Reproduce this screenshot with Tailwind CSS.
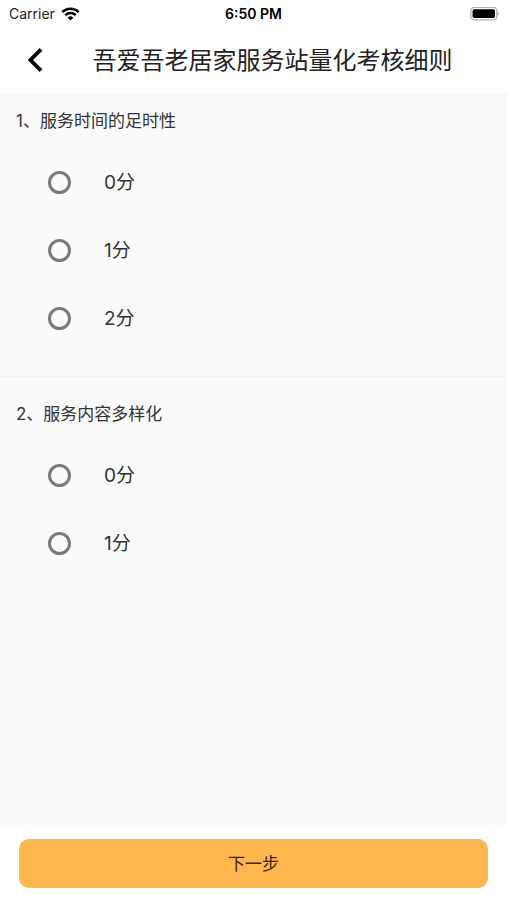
<!DOCTYPE html>
<html lang="zh-CN">
<head>
<meta charset="utf-8">
<meta name="viewport" content="width=device-width, initial-scale=1">
<title>吾爱吾老居家服务站量化考核细则</title>
<script src="https://cdn.jsdelivr.net/npm/@tailwindcss/browser@4"></script>
</head>
<body class="flex min-h-screen flex-col bg-[#fafafa] font-[Inter,'Noto_Sans_CJK_SC',sans-serif] text-[#333]">
  <div class="grid h-7 grid-cols-3 items-center bg-white px-2 text-black">
    <div class="flex items-center gap-1.5 pl-px text-sm text-[#222]">
      <span>Carrier</span>
      <svg class="h-3.5 w-[19px]" viewBox="0 0 18 14" fill="none" stroke="#000" stroke-width="2.4" aria-hidden="true">
        <path d="M0.8 5.1a11.6 11.6 0 0 1 16.4 0"/>
        <path d="M3.8 8.2a7.4 7.4 0 0 1 10.4 0"/>
        <path d="M9 13.6 6.2 10.7a4 4 0 0 1 5.6 0z" fill="#000" stroke="none"/>
      </svg>
    </div>
    <div class="text-center text-sm font-semibold whitespace-nowrap">6:50 PM</div>
    <svg class="h-3.5 w-[29px] justify-self-end" viewBox="0 0 29 14" aria-hidden="true">
      <rect x="0.8" y="0.3" width="26" height="12.6" rx="3.6" fill="#fff" stroke="#b3b3b3" stroke-width="1.3"/>
      <rect x="2.6" y="2.3" width="22.4" height="8.6" rx="1.6" fill="#000"/>
      <path d="M27.4 4.4c2 .6 2 3.8 0 4.4z" fill="#b3b3b3"/>
    </svg>
  </div>

  <header class="flex h-[67px] items-center border-b border-[#f1f1f1] bg-white">
    <button type="button" aria-label="返回" class="flex h-12 w-[70px] shrink-0 items-center justify-center pb-0.5">
      <svg class="h-6 w-4" viewBox="0 0 16 24" fill="none" stroke="#000" stroke-width="3.8" aria-hidden="true">
        <path d="M14 1.4 3.4 12 14 22.6"/>
      </svg>
    </button>
    <h1 class="flex-1 pr-8 text-center text-2xl font-normal whitespace-nowrap text-[#222]">吾爱吾老居家服务站量化考核细则</h1>
  </header>

  <main class="flex-1">
    <fieldset class="border-b border-[#f1f1f1] pb-6">
      <legend class="px-4 text-[17px] leading-[53px]">1、服务时间的足时性</legend>
      <label class="flex h-[68px] items-center gap-[33px] px-12 text-[19px]"><input type="radio" name="q1" value="0" class="size-[23px] appearance-none rounded-full border-3 border-[#7a7a7a] checked:bg-[#ffb74d]"><span class="pt-0.5">0分</span></label>
      <label class="flex h-[68px] items-center gap-[33px] px-12 text-[19px]"><input type="radio" name="q1" value="1" class="size-[23px] appearance-none rounded-full border-3 border-[#7a7a7a] checked:bg-[#ffb74d]"><span class="pt-0.5">1分</span></label>
      <label class="flex h-[68px] items-center gap-[33px] px-12 text-[19px]"><input type="radio" name="q1" value="2" class="size-[23px] appearance-none rounded-full border-3 border-[#7a7a7a] checked:bg-[#ffb74d]"><span class="pt-0.5">2分</span></label>
    </fieldset>
    <fieldset class="mt-[11px] pb-6">
      <legend class="px-4 text-[17px] leading-[53px]">2、服务内容多样化</legend>
      <label class="flex h-[68px] items-center gap-[33px] px-12 text-[19px]"><input type="radio" name="q2" value="0" class="size-[23px] appearance-none rounded-full border-3 border-[#7a7a7a] checked:bg-[#ffb74d]"><span class="pt-0.5">0分</span></label>
      <label class="flex h-[68px] items-center gap-[33px] px-12 text-[19px]"><input type="radio" name="q2" value="1" class="size-[23px] appearance-none rounded-full border-3 border-[#7a7a7a] checked:bg-[#ffb74d]"><span class="pt-0.5">1分</span></label>
    </fieldset>
  </main>

  <footer class="bg-white px-[19px] pt-[11px] pb-3">
    <button type="button" class="h-[49px] w-full rounded-[10px] bg-[#ffb74d] pt-0.5 text-[17px] text-[#33250f]">下一步</button>
  </footer>
</body>
</html>
